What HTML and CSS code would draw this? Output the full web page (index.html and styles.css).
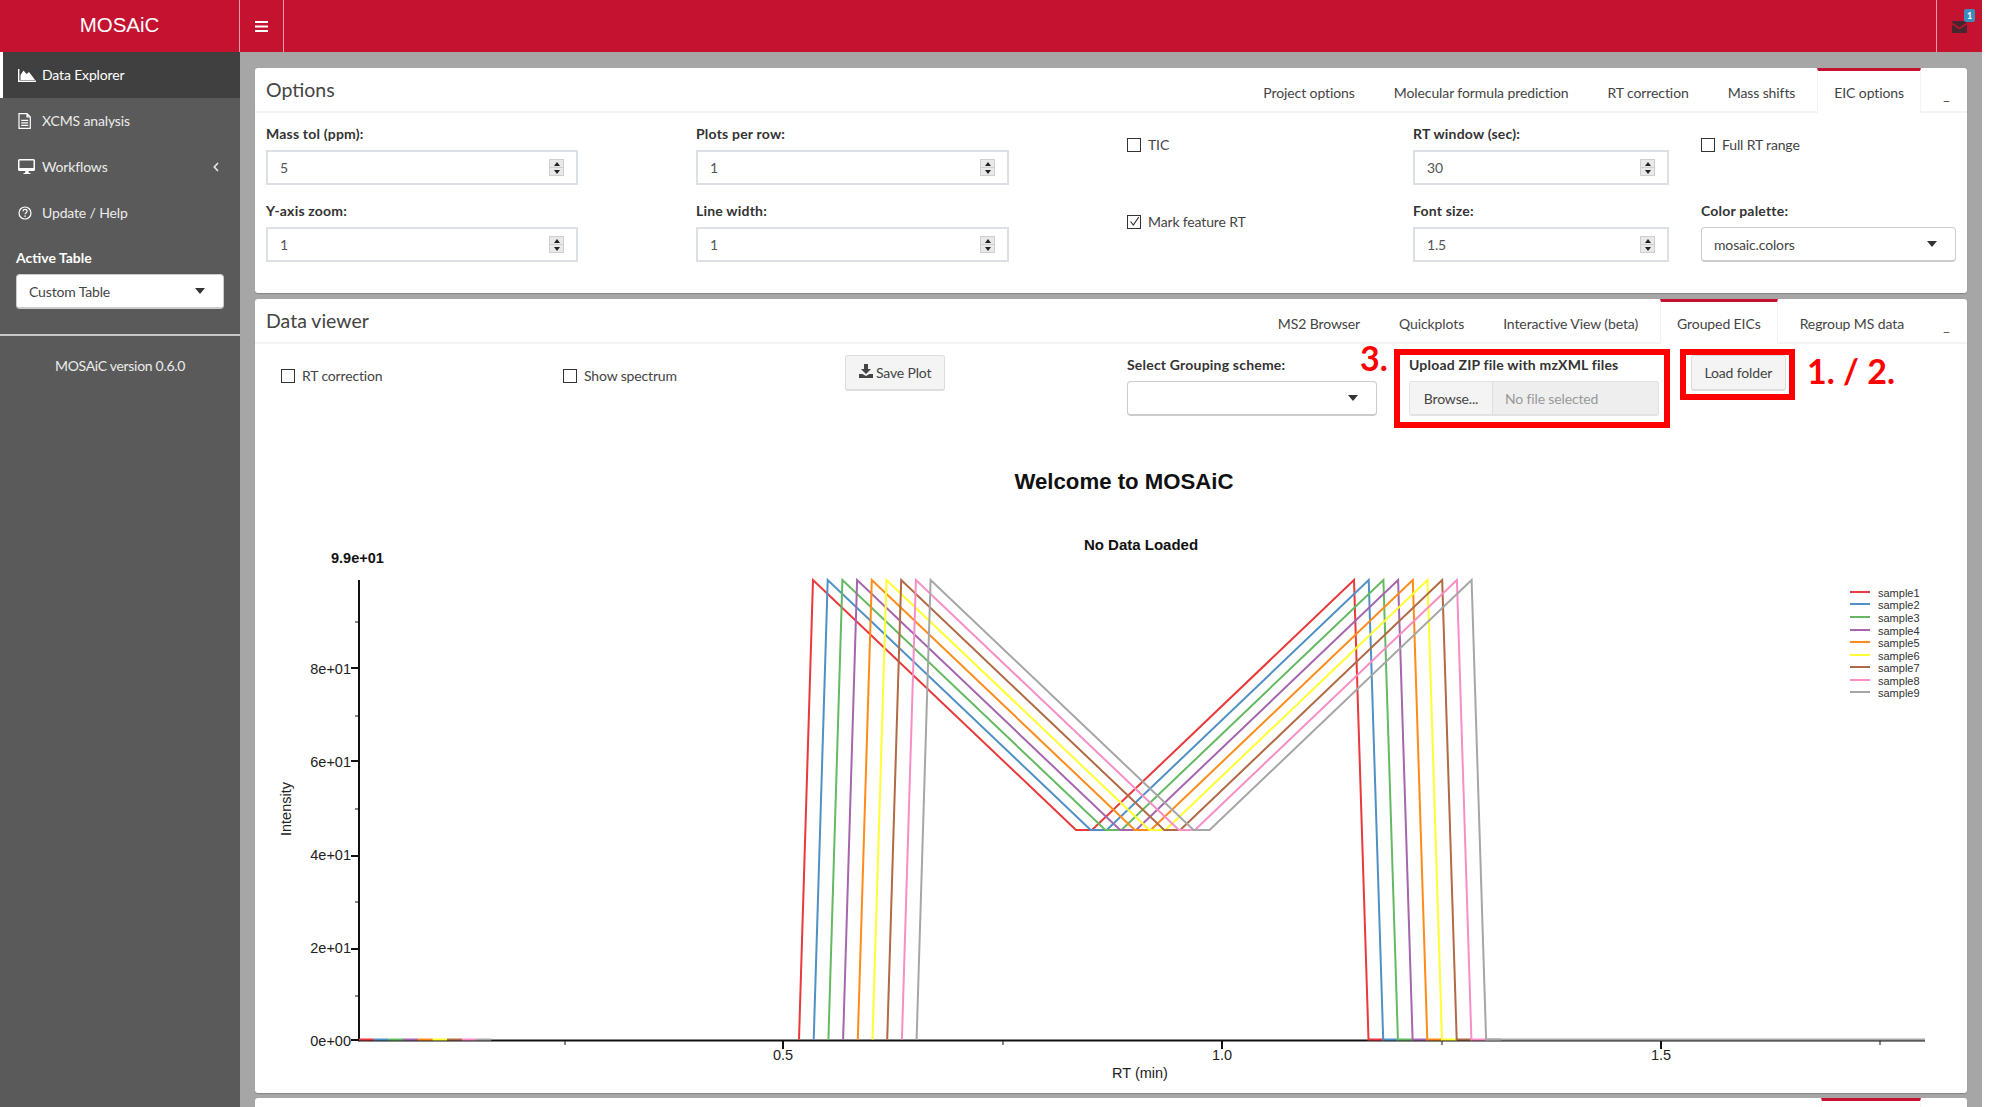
FILE: index.html
```html
<!DOCTYPE html>
<html lang="en">
<head>
    <meta charset="UTF-8">
    <title>MOSAiC</title>
    <link rel="stylesheet" href="styles.css">
</head>
<body>
<div class="page">

    <header class="topbar">
        <div class="logo">MOSAiC</div>
        <a class="toggle">
            <svg width="13" height="11" viewBox="0 0 13 11"><path d="M0 0h13v2H0zM0 4.500h13v2H0zM0 9h13v2H0z" fill="#fff"/></svg>
        </a>
        <div class="topbar-fill"></div>
        <a class="mail">
            <svg width="15" height="12" viewBox="0 0 15 12"><path d="M1 0h13a1 1 0 0 1 1 1v.6L7.500 6.500 0 1.600V1a1 1 0 0 1 1-1zM0 3.400l7.500 4.900L15 3.400V11a1 1 0 0 1-1 1H1a1 1 0 0 1-1-1z" fill="#47272f"/></svg>
            <span class="badge">1</span>
        </a>
    </header>

    <div class="layout">
        <aside class="sidebar">
            <ul class="menu">
                <li class="active">
                    <svg class="menu-icon" width="18" height="13" viewBox="0 0 18 13"><path d="M.7 0v12.300H18" fill="none" stroke="#fff" stroke-width="1.400"/><path d="M2.500 11V6l3-4.500L8.500 5 11 3l3.500 4.500L17 11z" fill="#fff"/></svg>
                    Data Explorer
                </li>
                <li>
                    <svg class="menu-icon" width="18" height="16" viewBox="0 0 18 16"><path d="M1 .7h8l3.300 3.300v11.300H1zM9 .7V4h3.300M3.200 7.300h7M3.200 9.800h7M3.200 12.300h7" fill="none" stroke="#fff" stroke-width="1.200"/></svg>
                    XCMS analysis
                </li>
                <li>
                    <svg class="menu-icon" width="18" height="16" viewBox="0 0 18 16"><path d="M1.500 0h14A1.500 1.500 0 0 1 17 1.500v9a1.500 1.500 0 0 1-1.500 1.500h-5l.5 2h1.500v1h-7v-1H7l.5-2h-6A1.500 1.500 0 0 1 0 10.500v-9A1.500 1.500 0 0 1 1.500 0zm0 1.500v7.500h14V1.500z" fill="#fff"/></svg>
                    Workflows
                    <svg class="chevron" width="6" height="10" viewBox="0 0 6 10"><path d="M5 1 1.300 5 5 9" fill="none" stroke="#e6e6e6" stroke-width="1.700"/></svg>
                </li>
                <li>
                    <svg class="menu-icon" width="18" height="14" viewBox="0 0 18 14"><circle cx="7" cy="7" r="6" fill="none" stroke="#fff" stroke-width="1.200"/><path d="M4.900 5.300C5.100 3.900 6 3.400 7 3.400c1.200 0 2.100.8 2.100 1.800 0 1.500-2 1.500-2 3" fill="none" stroke="#fff" stroke-width="1.200"/><path d="M6.300 9.400h1.500v1.400H6.300z" fill="#fff"/></svg>
                    Update / Help
                </li>
            </ul>
            <div class="active-table">
                <label>Active Table</label>
                <div class="select">Custom Table<span class="caret"></span></div>
            </div>
            <div class="version">MOSAiC version 0.6.0</div>
        </aside>

        <main class="content">

            <section class="card options-card">
                <div class="card-head">
                    <div class="card-title">Options</div>
                    <ul class="tabs">
                        <li>Project options</li>
                        <li>Molecular formula prediction</li>
                        <li>RT correction</li>
                        <li>Mass shifts</li>
                        <li class="active">EIC options</li>
                        <li class="minimize">_</li>
                    </ul>
                </div>
                <div class="options-grid">
                    <div class="field wide">
                        <label>Mass tol (ppm):</label>
                        <div class="num"><input type="number" value="5"><span class="spin"><i class="up"></i><i class="down"></i></span></div>
                    </div>
                    <div class="field wide">
                        <label>Plots per row:</label>
                        <div class="num"><input type="number" value="1"><span class="spin"><i class="up"></i><i class="down"></i></span></div>
                    </div>
                    <div class="check-cell"><span class="box"></span>TIC</div>
                    <div class="field mid">
                        <label>RT window (sec):</label>
                        <div class="num"><input type="number" value="30"><span class="spin"><i class="up"></i><i class="down"></i></span></div>
                    </div>
                    <div class="check-cell"><span class="box"></span>Full RT range</div>

                    <div class="field wide">
                        <label>Y-axis zoom:</label>
                        <div class="num"><input type="number" value="1"><span class="spin"><i class="up"></i><i class="down"></i></span></div>
                    </div>
                    <div class="field wide">
                        <label>Line width:</label>
                        <div class="num"><input type="number" value="1"><span class="spin"><i class="up"></i><i class="down"></i></span></div>
                    </div>
                    <div class="check-cell">
                        <span class="box"><svg width="11" height="11" viewBox="0 0 11 11"><path d="M1.500 5.500 4.300 9 9.800 1" fill="none" stroke="#333" stroke-width="1.200"/></svg></span>Mark feature RT
                    </div>
                    <div class="field mid">
                        <label>Font size:</label>
                        <div class="num"><input type="number" value="1.5"><span class="spin"><i class="up"></i><i class="down"></i></span></div>
                    </div>
                    <div class="field"><label>Color palette:</label><div class="select">mosaic.colors<span class="caret"></span></div></div>
                </div>
            </section>

            <section class="card viewer-card">
                <div class="card-head">
                    <div class="card-title">Data viewer</div>
                    <ul class="tabs">
                        <li>MS2 Browser</li>
                        <li>Quickplots</li>
                        <li>Interactive View (beta)</li>
                        <li class="active">Grouped EICs</li>
                        <li>Regroup MS data</li>
                        <li class="minimize">_</li>
                    </ul>
                </div>

                <div class="toolbar">
                    <div class="check-cell"><span class="box"></span>RT correction</div>
                    <div class="check-cell"><span class="box"></span>Show spectrum</div>
                    <div>
                        <button class="btn">
                            <svg width="14" height="14" viewBox="0 0 14 14"><path d="M5 0h4v5h3L7 10 2 5h3zM0 10h3.500L7 12l3.500-2H14v4H0z" fill="#444"/></svg>
                            Save Plot
                        </button>
                    </div>
                    <div class="tool-field">
                        <label>Select Grouping scheme:</label>
                        <div class="select"><span class="caret"></span></div>
                    </div>
                    <div class="tool-field">
                        <label>Upload ZIP file with mzXML files</label>
                        <div class="file-input">
                            <span class="browse">Browse...</span>
                            <span class="file-name">No file selected</span>
                        </div>
                    </div>
                    <div><button class="btn">Load folder</button></div>

                    <!-- red help marks over the toolbar -->
                    <div class="mark-box box-upload"></div>
                    <div class="mark-box box-load"></div>
                    <div class="mark-num num-three">3.</div>
                    <div class="mark-num num-one">1. / 2.</div>
                </div>

                <svg class="plot" width="1712" height="653" viewBox="255 440 1712 653">
                    <defs>
                        <g id="trace" fill="none">
                            <path d="M359 1039.500h14.700"/>
                            <path d="M799 1039.500 813 580 1076 830H1092L1354 580 1368.500 1039.500H1383.200"/>
                        </g>
                    </defs>

                    <text class="plot-main" x="1124" y="488.500" text-anchor="middle">Welcome to MOSAiC</text>
                    <text class="plot-sub" x="1141" y="550" text-anchor="middle">No Data Loaded</text>
                    <text class="plot-sub plot-max" x="331" y="563">9.9e+01</text>

                    <path class="axis" d="M359 580V1040.500H1925"/>
                    <path class="tick" d="M351 668h8M351 761h8M351 856h8M351 949h8M351 1040h8M783 1040v9M1222 1040v9M1661 1040v9"/>
                    <path class="tick-minor" d="M355 622h4M355 716h4M355 809h4M355 902h4M355 996h4M565 1040v5M1003 1040v5M1442 1040v5M1880 1040v5"/>

                    <g class="ticks-y" text-anchor="end">
                        <text x="351" y="674">8e+01</text>
                        <text x="351" y="767">6e+01</text>
                        <text x="351" y="860">4e+01</text>
                        <text x="351" y="953">2e+01</text>
                        <text x="351" y="1046">0e+00</text>
                    </g>
                    <g class="ticks-y" text-anchor="middle">
                        <text x="783" y="1060">0.5</text>
                        <text x="1222" y="1060">1.0</text>
                        <text x="1661" y="1060">1.5</text>
                        <text x="1140" y="1078">RT (min)</text>
                        <text transform="translate(291 809) rotate(-90)">Intensity</text>
                    </g>

                    <g class="traces">
                        <use href="#trace" x="0" stroke="#e8393b"/>
                        <use href="#trace" x="14.700" stroke="#5090c4"/>
                        <use href="#trace" x="29.400" stroke="#64b962"/>
                        <use href="#trace" x="44.100" stroke="#a566ae"/>
                        <use href="#trace" x="58.800" stroke="#ff8c1a"/>
                        <use href="#trace" x="73.500" stroke="#ffff33"/>
                        <use href="#trace" x="88.200" stroke="#b06a45"/>
                        <use href="#trace" x="102.900" stroke="#f78ec5"/>
                        <use href="#trace" x="117.600" stroke="#a6a6a6"/>
                        <path d="M1486 1039.500H1925" stroke="#a6a6a6" fill="none"/>
                    </g>

                    <g class="legend">
                        <path d="M1850 592h20" stroke="#e8393b"/><text x="1878" y="597">sample1</text>
                        <path d="M1850 604h20" stroke="#5090c4"/><text x="1878" y="609">sample2</text>
                        <path d="M1850 617h20" stroke="#64b962"/><text x="1878" y="621.500">sample3</text>
                        <path d="M1850 630h20" stroke="#a566ae"/><text x="1878" y="635">sample4</text>
                        <path d="M1850 642h20" stroke="#ff8c1a"/><text x="1878" y="647">sample5</text>
                        <path d="M1850 655h20" stroke="#ffff33"/><text x="1878" y="659.500">sample6</text>
                        <path d="M1850 667h20" stroke="#b06a45"/><text x="1878" y="672">sample7</text>
                        <path d="M1850 680h20" stroke="#f78ec5"/><text x="1878" y="684.500">sample8</text>
                        <path d="M1850 692h20" stroke="#a6a6a6"/><text x="1878" y="697">sample9</text>
                    </g>
                </svg>
            </section>

            <section class="card next-card">
                <ul class="tabs">
                    <li class="active">&nbsp;</li>
                </ul>
            </section>

        </main>
    </div>
</div>
</body>
</html>
```

FILE: styles.css
```css
* {
    box-sizing: border-box;
}
html, body {
    margin: 0;
    height: 100%;
    overflow: hidden;
    background: #fff;
}
body {
    font-family: Lato, "Noto Sans", sans-serif;
    font-size: 14px;
    line-height: 20px;
    letter-spacing: -0.15px;
    color: #444;
}
ul {
    list-style: none;
    margin: 0;
    padding: 0;
}
label {
    display: block;
    font-weight: bold;
    letter-spacing: 0.2px;
    color: #333;
}

.page {
    width: 1982px;
    height: 1107px;
    display: flex;
    flex-direction: column;
    background: #a6a6a6;
}

/* Top bar */
.topbar {
    height: 52px;
    flex: none;
    display: flex;
    background: #c41230;
}
.logo {
    width: 240px;
    line-height: 50px;
    text-align: center;
    font-family: "Liberation Sans", Arial, sans-serif;
    font-size: 20.500px;
    letter-spacing: 0;
    color: #fff;
    border-right: 1px solid #e8a0ad;
}
.toggle {
    width: 44px;
    display: flex;
    align-items: center;
    justify-content: center;
    border-right: 1px solid #e8a0ad;
}
.topbar-fill {
    flex: 1;
}
.mail {
    width: 46px;
    position: relative;
    display: flex;
    align-items: center;
    justify-content: center;
    border-left: 1px solid #e8a0ad;
}
.mail svg {
    margin-top: 1px;
}
.badge {
    position: absolute;
    top: 9px;
    right: 7px;
    width: 11px;
    height: 13px;
    border-radius: 2px;
    background: #3c8dbc;
    color: #fff;
    font-size: 9px;
    font-weight: bold;
    line-height: 13px;
    text-align: center;
}

.layout {
    flex: 1;
    display: flex;
    min-height: 0;
}

/* Sidebar */
.sidebar {
    width: 240px;
    flex: none;
    background: #5a5a5a;
    color: #ececec;
}
.menu li {
    height: 46px;
    display: flex;
    align-items: center;
    border-left: 3px solid transparent;
    padding-left: 15px;
}
.menu li.active {
    background: #404040;
    border-left-color: #fff;
    color: #fff;
}
.menu-icon {
    margin-right: 6px;
    flex: none;
}
.chevron {
    margin-left: auto;
    margin-right: 21px;
}
.active-table {
    padding: 12px 16px 25px 16px;
    border-bottom: 2px solid #c8c8c8;
}
.active-table label {
    color: #fff;
    letter-spacing: 0;
    margin-bottom: 6px;
}
.version {
    text-align: center;
    letter-spacing: -0.3px;
    margin-top: 20px;
}

/* Cards */
.content {
    flex: 1;
    min-width: 0;
    padding: 16px 15px 0 15px;
    overflow: hidden;
}
.card {
    background: #fff;
    border-radius: 3px;
    margin-bottom: 6px;
    box-shadow: 0 1px 1px rgba(0, 0, 0, 0.2);
}
.options-card {
    height: 225px;
}
.viewer-card {
    height: 794px;
    margin-bottom: 5px;
}
.next-card {
    height: 40px;
}
.card-head {
    height: 45px;
    display: flex;
    justify-content: space-between;
    border-bottom: 2px solid #f4f4f4;
}
.card-title {
    padding: 12px 11px;
    font-size: 19.500px;
    letter-spacing: 0;
    color: #444;
}
.tabs {
    display: flex;
    justify-content: flex-end;
    height: 45px;
    letter-spacing: -0.1px;
}
.tabs li {
    padding: 12px 16px 10px 16px;
    margin-right: 5px;
    border: 1px solid transparent;
    border-top-width: 3px;
    border-bottom: none;
}
.tabs li.active {
    background: #fff;
    border-top-color: #c41230;
    border-left-color: #f4f4f4;
    border-right-color: #f4f4f4;
}
.tabs li.minimize {
    width: 41px;
    margin-right: 0;
    padding: 14px 0 0 0;
    text-align: center;
}
.next-card .tabs li {
    margin-right: 46px;
    width: 100px;
}

/* Options form */
.options-grid {
    display: grid;
    grid-template-columns: 430px 431px 286px 288px 255px;
    row-gap: 16px;
    padding: 11px 0 0 11px;
}
.field label {
    margin-bottom: 6px;
}
.field.wide {
    padding-right: 118px;
}
.field.mid {
    padding-right: 32px;
}
.num {
    position: relative;
}
input[type="number"] {
    display: block;
    width: 100%;
    height: 35px;
    padding: 6px 12px;
    border: 2px solid #dcdfe6;
    font: inherit;
    letter-spacing: inherit;
    color: #555;
    background: #fff;
    -moz-appearance: textfield;
}
input[type="number"]::-webkit-inner-spin-button {
    display: none;
}
/* spinner drawn over the input, the native one does not look like this */
.spin {
    position: absolute;
    top: 9px;
    right: 14px;
    width: 15px;
    height: 17px;
    display: flex;
    flex-direction: column;
    background: #e9e9e9;
    border: 1px solid #cfcfcf;
}
.spin i {
    flex: 1;
    display: flex;
    align-items: center;
    justify-content: center;
}
.spin i:first-child {
    border-bottom: 1px solid #cfcfcf;
}
.spin .up::before {
    content: "";
    border-bottom: 4px solid #222;
    border-left: 3px solid transparent;
    border-right: 3px solid transparent;
}
.spin .down::before {
    content: "";
    border-top: 4px solid #222;
    border-left: 3px solid transparent;
    border-right: 3px solid transparent;
}
.select {
    position: relative;
    height: 35px;
    padding: 7px 12px;
    background: #fff;
    border: 1px solid #ccc;
    border-bottom-width: 2px;
    border-radius: 4px;
    color: #444;
}
.caret {
    position: absolute;
    right: 18px;
    top: 13px;
    border-top: 6px solid #333;
    border-left: 5px solid transparent;
    border-right: 5px solid transparent;
}
.check-cell {
    display: flex;
    align-items: center;
    padding-top: 11px;
    height: 30px;
}
.box {
    width: 14px;
    height: 14px;
    margin-right: 7px;
    border: 1px solid #333;
    display: flex;
    align-items: center;
    justify-content: center;
    flex: none;
}

/* Viewer toolbar */
.toolbar {
    position: relative;
    height: 96px;
    display: grid;
    grid-template-columns: repeat(6, 282px);
    padding: 11px 0 0 26px;
    align-items: start;
}
.toolbar .check-cell {
    height: 42px;
    padding-top: 0;
}
.tool-field {
    width: 250px;
}
.tool-field label {
    margin-bottom: 6px;
}
.btn {
    height: 36px;
    padding: 1px 12.500px 0 12.500px;
    font: inherit;
    letter-spacing: inherit;
    color: #444;
    background: #f4f4f4;
    border: 1px solid #ddd;
    border-bottom-width: 2px;
    border-radius: 3px;
}
.file-input {
    height: 35px;
    display: flex;
    background: #eee;
    border: 1px solid #e2e2e2;
    border-bottom-width: 2px;
    border-radius: 3px;
}
.browse {
    width: 83px;
    line-height: 33px;
    text-align: center;
    background: #f4f4f4;
    border-right: 1px solid #ddd;
}
.file-name {
    padding-left: 12px;
    line-height: 33px;
    color: #999;
}

/* Red marks on top of the screenshot */
.mark-box {
    position: absolute;
    top: 5px;
    border: 6px solid #f00;
}
.box-upload {
    left: 1139px;
    width: 276px;
    height: 79px;
}
.box-load {
    left: 1425px;
    width: 115px;
    height: 51px;
}
.mark-num {
    position: absolute;
    color: #f00;
    font-size: 34px;
    font-weight: bold;
    line-height: 36px;
    letter-spacing: 0;
    white-space: nowrap;
}
.num-three {
    left: 1105px;
    top: -4px;
}
.num-one {
    left: 1552px;
    top: 9px;
}

/* Plot */
.plot {
    display: block;
    font-family: "Liberation Sans", Arial, sans-serif;
    letter-spacing: 0;
}
.plot-main {
    font-size: 22.200px;
    font-weight: bold;
    fill: #111;
}
.plot-sub {
    font-size: 15px;
    font-weight: bold;
    fill: #111;
}
.plot-max {
    font-size: 14.500px;
}
.ticks-y {
    font-size: 14.500px;
    fill: #222;
}
.axis {
    fill: none;
    stroke: #111;
    stroke-width: 2;
}
.tick {
    stroke: #111;
    stroke-width: 2;
}
.tick-minor {
    stroke: #111;
    stroke-width: 1;
}
.traces {
    stroke-width: 2;
}
.legend {
    font-size: 11px;
    fill: #333;
    stroke-width: 2;
}
```
